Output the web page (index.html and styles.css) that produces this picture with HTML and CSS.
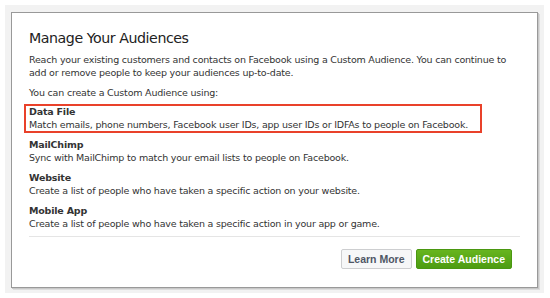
FILE: index.html
```html
<!DOCTYPE html>
<html lang="en">
<head>
    <meta charset="UTF-8">
    <title>Manage Your Audiences</title>
    <link rel="stylesheet" href="styles.css">
</head>
<body>

    <!-- 灰色外框 -->
    <div class="frame">
        <div class="dialog">
            <h2 class="dialog-title">Manage Your Audiences</h2>
            <p class="intro">Reach your existing customers and contacts on Facebook using a Custom Audience. You can continue to add or remove people to keep your audiences up-to-date.</p>
            <p class="intro lead">You can create a Custom Audience using:</p>

            <div class="option selected">
                <div class="option-name">Data File</div>
                <div class="option-desc">Match emails, phone numbers, Facebook user IDs, app user IDs or IDFAs to people on Facebook.</div>
            </div>
            <div class="option">
                <div class="option-name">MailChimp</div>
                <div class="option-desc">Sync with MailChimp to match your email lists to people on Facebook.</div>
            </div>
            <div class="option">
                <div class="option-name">Website</div>
                <div class="option-desc">Create a list of people who have taken a specific action on your website.</div>
            </div>
            <div class="option">
                <div class="option-name">Mobile App</div>
                <div class="option-desc">Create a list of people who have taken a specific action in your app or game.</div>
            </div>

            <!-- 底部按钮 -->
            <div class="footer">
                <button class="btn btn-plain">Learn More</button>
                <button class="btn btn-green">Create Audience</button>
            </div>
        </div>
    </div>

</body>
</html>
```

FILE: styles.css
```css
/* 页面基础样式 */
body {
    margin: 0;
    background: #fff;
    font-family: "DejaVu Sans", "Noto Sans", sans-serif;
    color: #333;
}

.frame {
    margin: 5px 6px 4px 5px;
    padding: 7px 6px 5px 6px;
    background: #f2f2f2;
}

/* 对话框 */
.dialog {
    background: #fff;
    border: 1px solid #999;
    box-shadow: 1px 1px 0 #c8c8c8, 2px 2px 0 #dcdcdc;
    padding: 15px 17px 18px 17px;
}

.dialog-title {
    margin: 0 0 5px;
    font-size: 14.2px;
    letter-spacing: -0.45px;
    line-height: 20px;
    font-weight: normal;
    color: #222;
}

.intro {
    margin: 0 0 7px;
    font-size: 9.5px;
    letter-spacing: -0.2px;
    line-height: 13px;
}

.intro.lead {
    margin-bottom: 5px;
}

.option {
    margin: 0 -5px 4px;
    padding: 0 12px 0 3px;
    border: 2px solid transparent;
    font-size: 9.5px;
    letter-spacing: -0.2px;
    line-height: 12.5px;
    width: fit-content;
}

.option.selected {
    border-color: #e9412a;
}

.option-name {
    font-weight: bold;
    color: #333;
}

.footer {
    display: flex;
    justify-content: flex-end;
    gap: 4px;
    padding: 12px 8px 0 0;
    border-top: 1px solid #e5e5e5;
}

/* 按钮样式 */
.btn {
    height: 20px;
    padding: 0 6px;
    font-family: "Liberation Sans", Arial, sans-serif;
    font-size: 10.5px;
    font-weight: bold;
    border-radius: 2px;
    cursor: pointer;
}

.btn-plain {
    background: #f6f7f8;
    border: 1px solid #cdced0;
    color: #4e5665;
}

.btn-green {
    background: linear-gradient(#67b51f, #4d9c12);
    border: 1px solid #4a9711;
    color: #fff;
}
```
